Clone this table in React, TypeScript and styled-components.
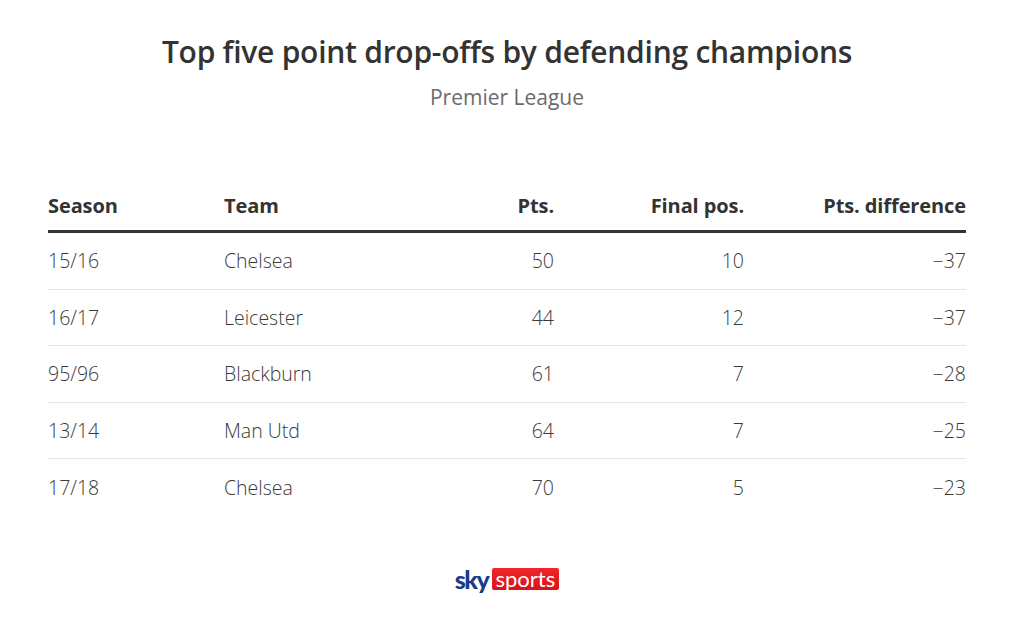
import React from 'react';
import styled, { createGlobalStyle } from 'styled-components';

const GlobalStyle = createGlobalStyle`
  body {
    margin: 0;
    background: #ffffff;
    font-family: "Open Sans", "Noto Sans", sans-serif;
  }
`;

const Page = styled.div`
  width: 1014px;
  height: 619px;
  display: flex;
  flex-direction: column;
  align-items: center;
  box-sizing: border-box;
  padding-top: 32px;
`;

const Title = styled.h1`
  margin: 0;
  font-size: 30px;
  font-weight: 600;
  color: #333333;
  line-height: 40px;
  letter-spacing: -0.25px;
`;

const Subtitle = styled.div`
  margin-top: 11px;
  font-size: 21px;
  font-weight: 400;
  color: #6b6b6b;
  line-height: 28px;
`;

const Table = styled.div`
  width: 918px;
  margin-top: 69px;
  font-family: "Open Sans", "Noto Sans", sans-serif;
`;

const Row = styled.div<{ $head?: boolean; $last?: boolean }>`
  display: grid;
  grid-template-columns: 176px 180px 150px 190px 222px;
  align-items: center;
  height: ${p => (p.$head ? '53px' : '56.6px')};
  border-bottom: ${p =>
    p.$head ? '3px solid #333333' : p.$last ? 'none' : '1px solid #e6e6e6'};
  box-sizing: border-box;
`;

const Cell = styled.div<{ $right?: boolean; $head?: boolean }>`
  text-align: ${p => (p.$right ? 'right' : 'left')};
  font-size: ${p => (p.$head ? '20px' : '19.5px')};
  font-weight: ${p => (p.$head ? 700 : 300)};
  color: ${p => (p.$head ? '#333333' : '#3a3a3a')};
  letter-spacing: ${p => (p.$head ? '-0.1px' : '0')};
`;

const Footer = styled.div`
  margin-top: 52px;
  display: flex;
  align-items: center;
  gap: 3px;
`;

const Sky = styled.span`
  font-family: "Lato", sans-serif;
  font-weight: 900;
  font-size: 25px;
  color: #1b3a8c;
  letter-spacing: -1.4px;
  line-height: 22px;
`;

const Sports = styled.span`
  background: linear-gradient(#f0262b, #d7141a);
  color: #ffffff;
  font-family: "Lato", sans-serif;
  font-size: 22px;
  font-weight: 400;
  line-height: 22px;
  padding: 0 4px;
  border-radius: 2px;
`;

const rows = [
  ['15/16', 'Chelsea', '50', '10', '\u221237'],
  ['16/17', 'Leicester', '44', '12', '\u221237'],
  ['95/96', 'Blackburn', '61', '7', '\u221228'],
  ['13/14', 'Man Utd', '64', '7', '\u221225'],
  ['17/18', 'Chelsea', '70', '5', '\u221223'],
];

const heads = ['Season', 'Team', 'Pts.', 'Final pos.', 'Pts. difference'];

export default function App() {
  return (
    <>
      <GlobalStyle />
      <Page>
        <Title>Top five point drop-offs by defending champions</Title>
        <Subtitle>Premier League</Subtitle>
        <Table>
          <Row $head>
            {heads.map((h, i) => (
              <Cell key={h} $head $right={i > 1}>
                {h}
              </Cell>
            ))}
          </Row>
          {rows.map((r, ri) => (
            <Row key={ri} $last={ri === rows.length - 1}>
              {r.map((c, i) => (
                <Cell key={i} $right={i > 1}>
                  {c}
                </Cell>
              ))}
            </Row>
          ))}
        </Table>
        <Footer>
          <Sky>sky</Sky>
          <Sports>sports</Sports>
        </Footer>
      </Page>
    </>
  );
}
